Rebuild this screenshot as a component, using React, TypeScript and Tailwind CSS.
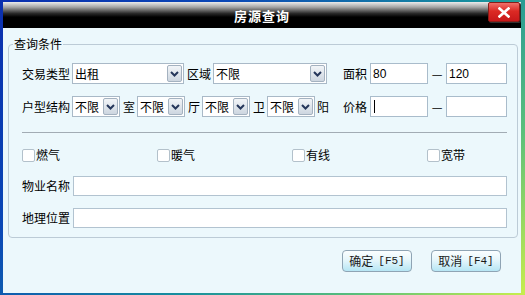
import React from "react";

const FONT = "font-['Noto_Sans_CJK_SC','Liberation_Sans',sans-serif]";

export default function App() {
  return (
    <div
      className={`w-[525px] h-[295px] flex flex-col pt-[2px] pl-[3px] pr-[4px] pb-[2px] bg-[linear-gradient(135deg,#0b2fae_0%,#0b48b6_28%,#178f9e_58%,#5cc07a_80%,#c8ee4c_100%)] text-[12px] text-black ${FONT}`}
    >
      {/* title bar */}
      <div className="h-[26px] shrink-0 grid grid-cols-[1fr_auto_1fr] items-center bg-[linear-gradient(to_bottom,#ececec_0%,#a4a4a4_20%,#2a2a2a_44%,#000_58%,#000_100%)]">
        <div />
        <div className="text-white font-bold text-[13px] leading-none tracking-[1px]">
          房源查询
        </div>
        <div className="justify-self-end self-start mr-[1px]">
          <div className="w-[32px] h-[20px] flex items-center justify-center rounded-[2px] border border-[#8a1c18] bg-[linear-gradient(to_bottom,#f0706a_0%,#dc2a24_45%,#c8181a_100%)] shadow-[1px_1px_0_#303030]">
            <svg width="12" height="11" viewBox="0 0 12 11">
              <path
                d="M1.5 1.5l9 8M10.5 1.5l-9 8"
                stroke="#fff"
                strokeWidth="2.6"
                strokeLinecap="square"
              />
            </svg>
          </div>
        </div>
      </div>

      {/* body */}
      <div className="flex-1 bg-[#ecf8fc] flex flex-col">
        <div className="relative mt-[16px] ml-[5px] mr-[3px] border border-[#bccbd6] rounded-[4px] pt-[18px] pb-[9px] pl-[13px] pr-[10px]">
          <span className="absolute left-[4px] top-[-9px] px-[1px] bg-[#ecf8fc] leading-[16px]">
            查询条件
          </span>

          {/* row 1 */}
          <div className="h-[21px] flex items-center">
            <span className="w-[48px]">交易类型</span>
            <Select value="出租" w="w-[112px]" className="ml-[2px]" />
            <span className="ml-[3px]">区域</span>
            <Select value="不限" w="w-[114px]" className="ml-[2px]" />
            <Range label="面积" from="80" to="120" />
          </div>

          {/* row 2 */}
          <div className="h-[21px] mt-[12px] flex items-center">
            <span className="w-[48px]">户型结构</span>
            <Select value="不限" w="w-[48px]" className="ml-[2px]" />
            <span className="ml-[3px]">室</span>
            <Select value="不限" w="w-[48px]" className="ml-[2px]" />
            <span className="ml-[3px]">厅</span>
            <Select value="不限" w="w-[48px]" className="ml-[2px]" />
            <span className="ml-[3px]">卫</span>
            <Select value="不限" w="w-[48px]" className="ml-[2px]" />
            <span className="ml-[2px]">阳</span>
            <Range label="价格" from="" to="" caret />
          </div>

          <div className="mt-[15px] h-[1px] bg-[#a2acb4]" />

          {/* checkboxes */}
          <div className="mt-[13px] h-[16px] grid grid-cols-[135px_135px_135px_1fr] items-center">
            <Check label="燃气" />
            <Check label="暖气" />
            <Check label="有线" />
            <Check label="宽带" />
          </div>

          <TextRow label="物业名称" className="mt-[14px]" />
          <TextRow label="地理位置" className="mt-[12px]" />
        </div>

        <div className="mt-[12px] pr-[20px] flex justify-end gap-[19px]">
          <Button text="确定" hint="[F5]" />
          <Button text="取消" hint="[F4]" />
        </div>
      </div>
    </div>
  );
}

function Select({
  value,
  w,
  className = "",
}: {
  value: string;
  w: string;
  className?: string;
}) {
  return (
    <div
      className={`${w} ${className} h-[21px] flex items-center border border-[#a9b9c7] bg-white`}
    >
      <span className="flex-1 pl-[2px] whitespace-nowrap">{value}</span>
      <span className="mr-[1px] w-[15px] h-[17px] shrink-0 flex items-center justify-center border border-[#a4b2c0] rounded-[2px] bg-[linear-gradient(to_bottom,#f2f5f8,#cdd6e0)]">
        <svg width="9" height="6" viewBox="0 0 9 6">
          <path d="M1 1l3.5 3.5L8 1" stroke="#25365a" strokeWidth="2" fill="none" />
        </svg>
      </span>
    </div>
  );
}

function Range({
  label,
  from,
  to,
  caret,
}: {
  label: string;
  from: string;
  to: string;
  caret?: boolean;
}) {
  return (
    <div className="ml-auto w-[164px] h-[21px] flex items-center">
      <span className="w-[24px]">{label}</span>
      <div className="ml-[3px] w-[58px] h-[21px] flex items-center border border-[#a9bccb] bg-white pl-[2px] font-['Liberation_Sans',sans-serif]">
        {caret ? <span className="w-[1px] h-[13px] ml-[1px] bg-black" /> : from}
      </div>
      <span className="w-[18px] text-center">—</span>
      <div className="w-[61px] h-[21px] flex items-center border border-[#a9bccb] bg-white pl-[2px] font-['Liberation_Sans',sans-serif]">
        {to}
      </div>
    </div>
  );
}

function Check({ label }: { label: string }) {
  return (
    <div className="flex items-center">
      <span className="w-[13px] h-[13px] border border-[#b3c1cb] rounded-[2px] bg-white" />
      <span className="ml-[1px]">{label}</span>
    </div>
  );
}

function TextRow({ label, className = "" }: { label: string; className?: string }) {
  return (
    <div className={`${className} h-[20px] flex items-center`}>
      <span className="w-[48px]">{label}</span>
      <div className="ml-[3px] flex-1 h-[20px] border border-[#b2c3d0] bg-white" />
    </div>
  );
}

function Button({ text, hint }: { text: string; hint: string }) {
  return (
    <div className="w-[70px] h-[22px] flex items-center justify-center rounded-[4px] border border-[#8fa4b4] bg-[linear-gradient(to_bottom,#fbfeff_0%,#e6f6fb_45%,#b6e6f4_100%)] text-[#1a1a1a]">
      <span>{text}</span>
      <span className="ml-[5px] font-['Liberation_Mono',monospace] text-[11px]">{hint}</span>
    </div>
  );
}
